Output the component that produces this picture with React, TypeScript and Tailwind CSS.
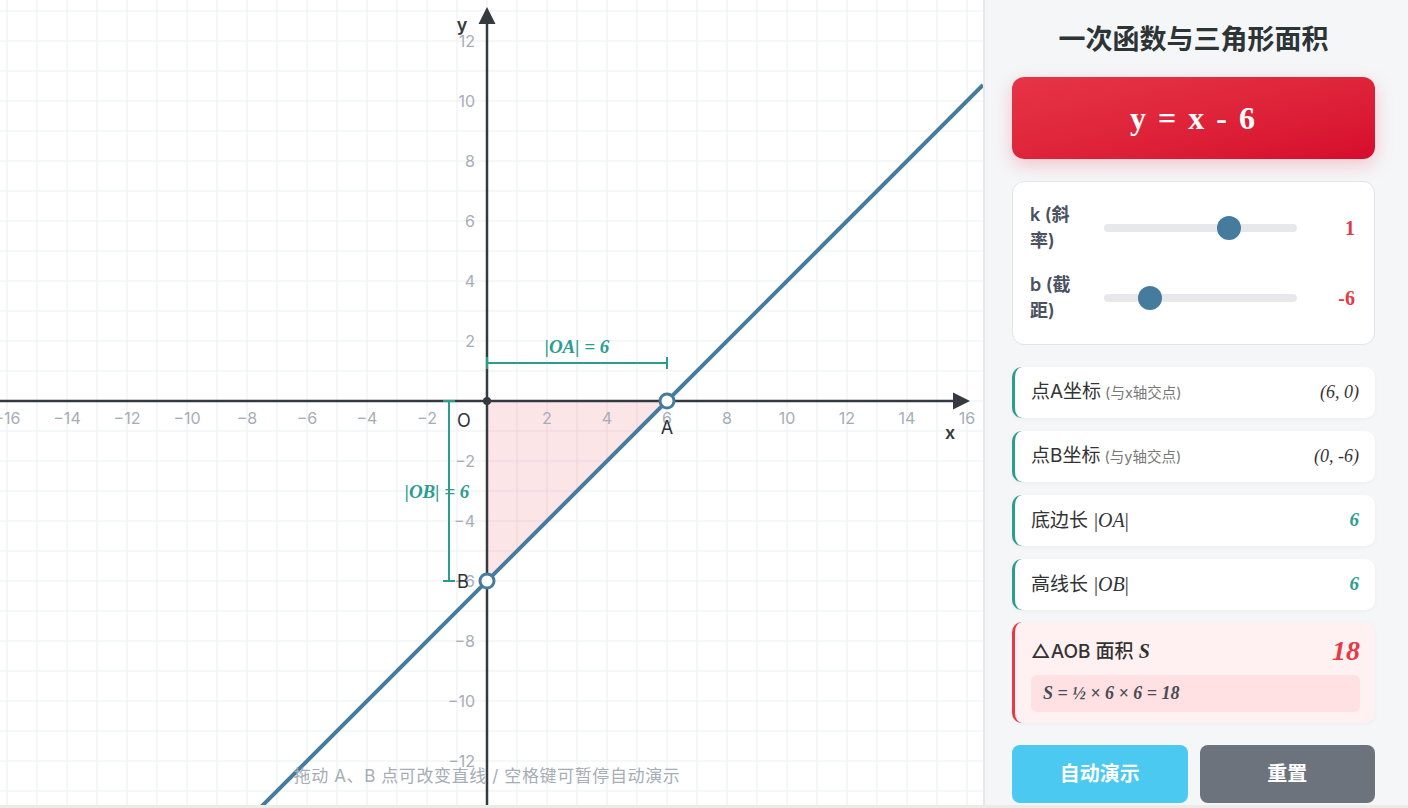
const OX = 487;
const OY = 401;
const U = 30;
const W = 983;
const H = 805;

const k = 1;
const b = -6;

const px = (x: number) => OX + x * U;
const py = (y: number) => OY - y * U;

const sans = "font-['Inter','Noto_Sans_CJK_SC',sans-serif]";
const serif = "font-['Liberation_Serif','Times_New_Roman',serif]";

function Graph() {
  const vLines = Array.from({ length: 33 }, (_, i) => 7 + i * U);
  const hLines = Array.from({ length: 27 }, (_, i) => 11 + i * U);
  const xTicks = [-16, -14, -12, -10, -8, -6, -4, -2, 2, 4, 6, 8, 10, 12, 14, 16];
  const yTicks = [-12, -10, -8, -6, -4, -2, 2, 4, 6, 8, 10, 12];
  const fmt = (n: number) => (n < 0 ? "\u2212" + Math.abs(n) : String(n));

  const yAt = (sx: number) => py(k * ((sx - OX) / U) + b);
  const ax = px(-b / k);
  const by = py(b);

  return (
    <svg width={W} height={H} className="block" style={{ fontFamily: "Inter, 'Noto Sans CJK SC', sans-serif" }}>
      {vLines.map((x) => (
        <line key={"v" + x} x1={x} y1={0} x2={x} y2={H} stroke="#eef0f3" strokeWidth={1.2} />
      ))}
      {hLines.map((y) => (
        <line key={"h" + y} x1={0} y1={y} x2={W} y2={y} stroke="#eef0f3" strokeWidth={1.2} />
      ))}

      {/* triangle */}
      <polygon points={`${OX},${OY} ${ax},${OY} ${OX},${by}`} fill="rgba(230,57,70,0.13)" />

      {/* axes */}
      <line x1={0} y1={OY} x2={956} y2={OY} stroke="#343a40" strokeWidth={2.5} />
      <polygon points="970,401 953,392.5 953,409.5" fill="#343a40" />
      <line x1={OX} y1={H} x2={OX} y2={22} stroke="#343a40" strokeWidth={2.5} />
      <polygon points="487,7 478.5,24 495.5,24" fill="#343a40" />

      {xTicks.map((n) => (
        <text key={"x" + n} x={px(n)} y={424} fontSize={16} fill="#a6adb6" textAnchor="middle">
          {fmt(n)}
        </text>
      ))}
      {yTicks.map((n) => (
        <text key={"y" + n} x={475} y={py(n) + 6} fontSize={16} fill="#a6adb6" textAnchor="end">
          {fmt(n)}
        </text>
      ))}

      <text x={950} y={439} fontSize={18} fontWeight={600} fill="#343a40" textAnchor="middle">x</text>
      <text x={462} y={31} fontSize={18} fontWeight={600} fill="#343a40" textAnchor="middle">y</text>

      {/* measures */}
      <g stroke="#2a9d8f" strokeWidth={2}>
        <line x1={OX} y1={363} x2={ax} y2={363} />
        <line x1={OX} y1={357} x2={OX} y2={369} />
        <line x1={ax} y1={357} x2={ax} y2={369} />
        <line x1={449} y1={OY} x2={449} y2={by} />
        <line x1={443} y1={OY} x2={455} y2={OY} />
        <line x1={443} y1={by} x2={455} y2={by} />
      </g>
      <text
        x={577}
        y={353}
        fontSize={19}
        fontWeight={700}
        fontStyle="italic"
        fill="#2a9d8f"
        textAnchor="middle"
        style={{ fontFamily: "'Liberation Serif', serif" }}
      >
        |OA| = 6
      </text>
      <text
        x={437}
        y={498}
        fontSize={19}
        fontWeight={700}
        fontStyle="italic"
        fill="#2a9d8f"
        textAnchor="middle"
        style={{ fontFamily: "'Liberation Serif', serif" }}
      >
        |OB| = 6
      </text>

      {/* line */}
      <line x1={0} y1={yAt(0)} x2={W} y2={yAt(W)} stroke="#457b9d" strokeWidth={4} />

      <circle cx={OX} cy={OY} r={4} fill="#343a40" />
      <text x={464} y={427} fontSize={18} fill="#2d3436" textAnchor="middle">O</text>
      <text x={667} y={434} fontSize={18} fill="#2d3436" textAnchor="middle">A</text>
      <text x={463} y={588} fontSize={18} fill="#2d3436" textAnchor="middle">B</text>

      <circle cx={ax} cy={OY} r={7} fill="#fff" stroke="#457b9d" strokeWidth={3} />
      <circle cx={OX} cy={by} r={7} fill="#fff" stroke="#457b9d" strokeWidth={3} />
    </svg>
  );
}

function Slider({ label1, label2, value, min, max }: { label1: string; label2: string; value: number; min: number; max: number }) {
  const left = ((value - min) / (max - min)) * (193 - 24);
  return (
    <div className="flex h-[56px] items-center">
      <div className="w-[56px] text-[18px] font-semibold leading-[26px] text-[#4a5160]">
        {label1}
        <br />
        {label2}
      </div>
      <div className="relative ml-[18px] h-[8px] w-[193px] rounded-full bg-[#e6e8ec]">
        <div
          className="absolute top-1/2 h-[24px] w-[24px] -translate-y-1/2 rounded-full bg-[#457b9d]"
          style={{ left }}
        />
      </div>
      <div className={`ml-[12px] w-[46px] text-right text-[20px] font-bold text-[#e63946] ${serif}`}>{value}</div>
    </div>
  );
}

function InfoCard({ children, value }: { children: React.ReactNode; value: React.ReactNode }) {
  return (
    <div className="flex h-[51px] items-center justify-between rounded-[10px] border-l-[3px] border-[#2a9d8f] bg-white pl-4 pr-4 shadow-[0_1px_4px_rgba(0,0,0,0.04)]">
      <div className="flex items-baseline text-[19px] text-[#333]">{children}</div>
      {value}
    </div>
  );
}

export default function App() {
  return (
    <div className={`h-[808px] w-[1408px] overflow-hidden bg-[#ecebe7] ${sans}`}>
      <div className="flex h-[805px]">
        <div className="relative w-[983px] shrink-0 bg-white">
          <Graph />
          <div className="absolute bottom-[16px] left-0 w-[974px] text-center text-[17px] tracking-[0.6px] text-[#a6adb6]">
            拖动 A、B 点可改变直线 / 空格键可暂停自动演示
          </div>
        </div>

        <div className="flex w-[425px] flex-col border-l-2 border-[#e6e8eb] bg-[#f5f6f8] pl-[27px] pr-[33px] pt-[22px]">
          <h1 className="h-[36px] text-center text-[27px] font-bold leading-[36px] text-[#2d3436]">一次函数与三角形面积</h1>

          <div className="mt-[19px] flex h-[82px] items-center justify-center rounded-[12px] bg-gradient-to-br from-[#e73447] to-[#d60a2c] shadow-[0_6px_18px_rgba(230,57,70,0.25)]">
            <span className={`text-[32px] font-bold tracking-[2px] text-white ${serif}`}>y = x - 6</span>
          </div>

          <div className="mt-[22px] flex flex-col gap-[14px] rounded-[12px] border border-[#e2e4e8] bg-white px-[17px] py-[18px]">
            <Slider label1="k (斜" label2="率)" value={k} min={-3} max={3} />
            <Slider label1="b (截" label2="距)" value={b} min={-10} max={10} />
          </div>

          <div className="mt-[22px] flex flex-col gap-[13px]">
            <InfoCard value={<span className={`text-[18px] italic text-[#333] ${serif}`}>(6, 0)</span>}>
              点A坐标<span className="ml-1 text-[14.5px] text-[#777]">(与x轴交点)</span>
            </InfoCard>
            <InfoCard value={<span className={`text-[18px] italic text-[#333] ${serif}`}>(0, -6)</span>}>
              点B坐标<span className="ml-1 text-[14.5px] text-[#777]">(与y轴交点)</span>
            </InfoCard>
            <InfoCard value={<span className={`text-[19px] font-bold italic text-[#2a9d8f] ${serif}`}>6</span>}>
              底边长<span className={`ml-[6px] text-[20px] ${serif}`}>|<i>OA</i>|</span>
            </InfoCard>
            <InfoCard value={<span className={`text-[19px] font-bold italic text-[#2a9d8f] ${serif}`}>6</span>}>
              高线长<span className={`ml-[6px] text-[20px] ${serif}`}>|<i>OB</i>|</span>
            </InfoCard>
          </div>

          <div className="mt-[12px] flex h-[101px] flex-col rounded-[10px] border-l-[3px] border-[#e63946] bg-[#fff1f2] pl-4 pr-[15px] pt-[14px] shadow-[0_1px_4px_rgba(0,0,0,0.04)]">
            <div className="flex h-[30px] items-center justify-between">
              <div className="text-[19px] font-medium text-[#333]">
                △AOB 面积 <i className={`text-[20px] font-bold ${serif}`}>S</i>
              </div>
              <span className={`text-[28px] font-bold italic text-[#e63946] ${serif}`}>18</span>
            </div>
            <div className={`mt-[9px] flex h-[37px] items-center rounded-[6px] bg-[#ffe0e3] px-3 text-[18px] font-bold italic text-[#484c55] ${serif}`}>
              S = ½ × 6 × 6 = 18
            </div>
          </div>

          <div className="mt-[22px] grid h-[58px] grid-cols-2 gap-[12px]">
            <button className="rounded-[8px] bg-[#4cc9f0] text-[20px] font-bold text-white">自动演示</button>
            <button className="rounded-[8px] bg-[#6c737d] text-[20px] font-bold text-white">重置</button>
          </div>
        </div>
      </div>
    </div>
  );
}
